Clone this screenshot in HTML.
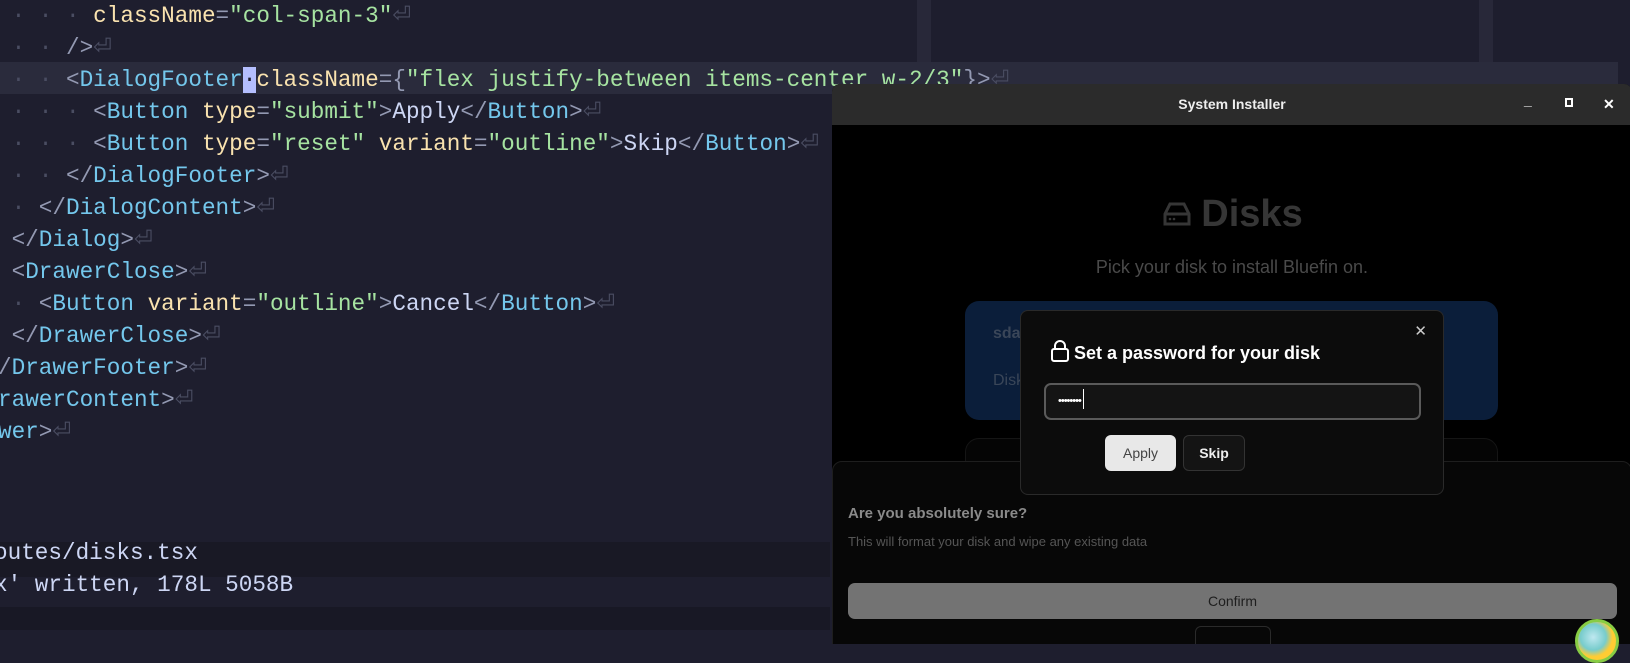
<!DOCTYPE html>
<html><head><meta charset="utf-8"><style>
*{margin:0;padding:0;box-sizing:border-box}
body{width:1630px;height:630px;overflow:hidden;background:#1e1e2e;position:relative;font-family:"Liberation Sans",sans-serif}
.ed{position:absolute;left:0;top:0;width:1630px;height:630px}
.col{position:absolute;top:0;width:14px;height:630px;background:#282839}
.cur{position:absolute;left:0;top:62px;width:1618px;height:32px;background:#2a2b3c}
pre{position:absolute;left:-70px;top:0;font-family:"Liberation Mono",monospace;font-size:22.67px;line-height:32px;color:#cdd6f4;white-space:pre}
.t{color:#74c7ec}.a{color:#f9e2af}.s{color:#a6e3a1}.p{color:#9399b2}.g{color:#4a4d62}
.st1{position:absolute;left:0;top:542px;width:830px;height:35px;background:#191925}
.st2{position:absolute;left:0;top:577px;width:830px;height:30px;background:#1e1e2e}
.st3{position:absolute;left:0;top:607px;width:830px;height:23px;background:#181825}
.stt{position:absolute;font-family:"Liberation Mono",monospace;font-size:22.67px;color:#cdd6f4;left:-6px}
.win{position:absolute;left:832px;top:84px;width:800px;height:560px;background:#000;border-radius:8px 8px 0 0;overflow:hidden}
.tb{height:41px;background:#2b2b2b;color:#eee;font-size:14px;font-weight:bold;text-align:center;line-height:41px;position:relative}
.ctl{position:absolute;top:0;color:#fff;font-size:14px}
.h{position:absolute;left:0;width:800px;text-align:center}
.card{position:absolute;left:133px;top:217px;width:533px;height:119px;background:#0b1e3a;border-radius:14px}
.card2{position:absolute;left:133px;top:354px;width:533px;height:60px;background:#050505;border:1px solid #151515;border-radius:14px}
.drawer{position:absolute;left:0;top:377px;width:800px;height:200px;background:#070707;border:1px solid #1e1e1e;border-radius:10px}
.dlg{position:absolute;left:188px;top:226px;width:424px;height:185px;background:#0c0c0c;border:1px solid #2a2a2a;border-radius:8px}
</style></head><body>
<div class="ed">
<div class="col" style="left:917px"></div><div class="col" style="left:1479px"></div>
<div class="cur"></div>
<pre><span class="g">    · · · ·</span> <span class="a">className</span><span class="p">=</span><span class="s">"col-span-3"</span><span class="g">⏎</span>
<span class="g">    · · · </span><span class="p">/&gt;</span><span class="g">⏎</span>
<span class="g">    · · · </span><span class="p">&lt;</span><span class="t">DialogFooter</span><span style="background:#b4befe;color:#1e1e2e">·</span><span class="a">className</span><span class="p">={</span><span class="s">"flex justify-between items-center w-2/3"</span><span class="p">}&gt;</span><span class="g">⏎</span>
<span class="g">    · · · ·</span> <span class="p">&lt;</span><span class="t">Button</span> <span class="a">type</span><span class="p">=</span><span class="s">"submit"</span><span class="p">&gt;</span>Apply<span class="p">&lt;/</span><span class="t">Button</span><span class="p">&gt;</span><span class="g">⏎</span>
<span class="g">    · · · ·</span> <span class="p">&lt;</span><span class="t">Button</span> <span class="a">type</span><span class="p">=</span><span class="s">"reset"</span> <span class="a">variant</span><span class="p">=</span><span class="s">"outline"</span><span class="p">&gt;</span>Skip<span class="p">&lt;/</span><span class="t">Button</span><span class="p">&gt;</span><span class="g">⏎</span>
<span class="g">    · · · </span><span class="p">&lt;/</span><span class="t">DialogFooter</span><span class="p">&gt;</span><span class="g">⏎</span>
<span class="g">    · · </span><span class="p">&lt;/</span><span class="t">DialogContent</span><span class="p">&gt;</span><span class="g">⏎</span>
<span class="g">    · </span><span class="p">&lt;/</span><span class="t">Dialog</span><span class="p">&gt;</span><span class="g">⏎</span>
<span class="g">    · </span><span class="p">&lt;</span><span class="t">DrawerClose</span><span class="p">&gt;</span><span class="g">⏎</span>
<span class="g">    · · </span><span class="p">&lt;</span><span class="t">Button</span> <span class="a">variant</span><span class="p">=</span><span class="s">"outline"</span><span class="p">&gt;</span>Cancel<span class="p">&lt;/</span><span class="t">Button</span><span class="p">&gt;</span><span class="g">⏎</span>
<span class="g">    · </span><span class="p">&lt;/</span><span class="t">DrawerClose</span><span class="p">&gt;</span><span class="g">⏎</span>
<span class="g">    </span><span class="p">&lt;/</span><span class="t">DrawerFooter</span><span class="p">&gt;</span><span class="g">⏎</span>
<span class="g">  </span><span class="p">&lt;/</span><span class="t">DrawerContent</span><span class="p">&gt;</span><span class="g">⏎</span>
<span class="p">&lt;/</span><span class="t">Drawer</span><span class="p">&gt;</span><span class="g">⏎</span></pre>
<div class="st1"><div class="stt" style="top:-2px">outes/disks.tsx</div></div>
<div class="st2"><div class="stt" style="top:-5px">x' written, 178L 5058B</div></div>
<div class="st3"></div>
</div>

<div class="win">
<div class="tb">System Installer
<span class="ctl" style="left:692px;top:-4px">_</span>
<span class="ctl" style="left:733px;top:14px;width:8px;height:9px;border:2px solid #fff"></span>
<span class="ctl" style="left:771px">✕</span>
</div>
<div class="h" style="top:109px;font-size:38px;font-weight:bold;color:#363636">
<svg width="32" height="28" viewBox="0 0 32 28" style="vertical-align:-2px;margin-right:8px"><path d="M4 14 L9 4 H23 L28 14 V24 H4 Z M4 14 H28" fill="none" stroke="#363636" stroke-width="3"/><circle cx="9" cy="19" r="1.3" fill="#363636"/><circle cx="13" cy="19" r="1.3" fill="#363636"/></svg>Disks</div>
<div class="h" style="top:173px;font-size:18px;color:#4a4a4a">Pick your disk to install Bluefin on.</div>
<div class="card"><div style="position:absolute;left:28px;top:24px;color:#3a4658;font-weight:bold;font-size:16px">sda</div><div style="position:absolute;left:28px;top:71px;color:#3a4658;font-size:16px">Disk</div></div>
<div class="card2"></div>
<div class="drawer">
<div style="position:absolute;left:15px;top:43px;font-size:15px;font-weight:bold;color:#8a8a8a">Are you absolutely sure?</div>
<div style="position:absolute;left:15px;top:72px;font-size:13px;color:#555">This will format your disk and wipe any existing data</div>
<div style="position:absolute;left:15px;top:121px;width:769px;height:36px;background:#737373;border-radius:7px;text-align:center;line-height:36px;font-size:14px;color:#1e1e1e">Confirm</div>
<div style="position:absolute;left:362px;top:164px;width:76px;height:30px;border:1px solid #2a2a2a;border-radius:6px"></div>
</div>
<div class="dlg">
<div style="position:absolute;right:16px;top:11px;color:#ccc;font-size:15px">✕</div>
<div style="position:absolute;left:29px;top:29px;font-size:18px;font-weight:bold;color:#fff">
<svg width="20" height="22" viewBox="0 0 20 22" style="vertical-align:-3px;margin-right:4px"><rect x="2" y="9" width="16" height="12" rx="2" fill="none" stroke="#fff" stroke-width="2"/><path d="M5 9 V6 a5 5 0 0 1 10 0 V9" fill="none" stroke="#fff" stroke-width="2"/></svg>Set a password for your disk</div>
<div style="position:absolute;left:23px;top:72px;width:377px;height:37px;background:#141414;border:2px solid #5a5a5a;border-radius:7px;color:#fff;font-size:11px;line-height:33px;padding-left:12px;letter-spacing:-1px">••••••••<span style="display:inline-block;width:1px;height:20px;background:#fff;vertical-align:-5px;margin-left:2px"></span></div>
<div style="position:absolute;left:84px;top:124px;width:71px;height:36px;background:#e8e8e8;border-radius:6px;text-align:center;line-height:36px;font-size:14px;color:#444">Apply</div>
<div style="position:absolute;left:162px;top:124px;width:62px;height:36px;background:#141414;border:1px solid #333;border-radius:6px;text-align:center;line-height:34px;font-size:14px;font-weight:bold;color:#eee">Skip</div>
</div>
</div>
<div style="position:absolute;left:1575px;top:619px;width:44px;height:44px;border-radius:50%;background:radial-gradient(circle at 40% 40%,#bfe8f0,#7cc 40%,#fc3 60%);border:3px solid #8c4"></div>
</body></html>
